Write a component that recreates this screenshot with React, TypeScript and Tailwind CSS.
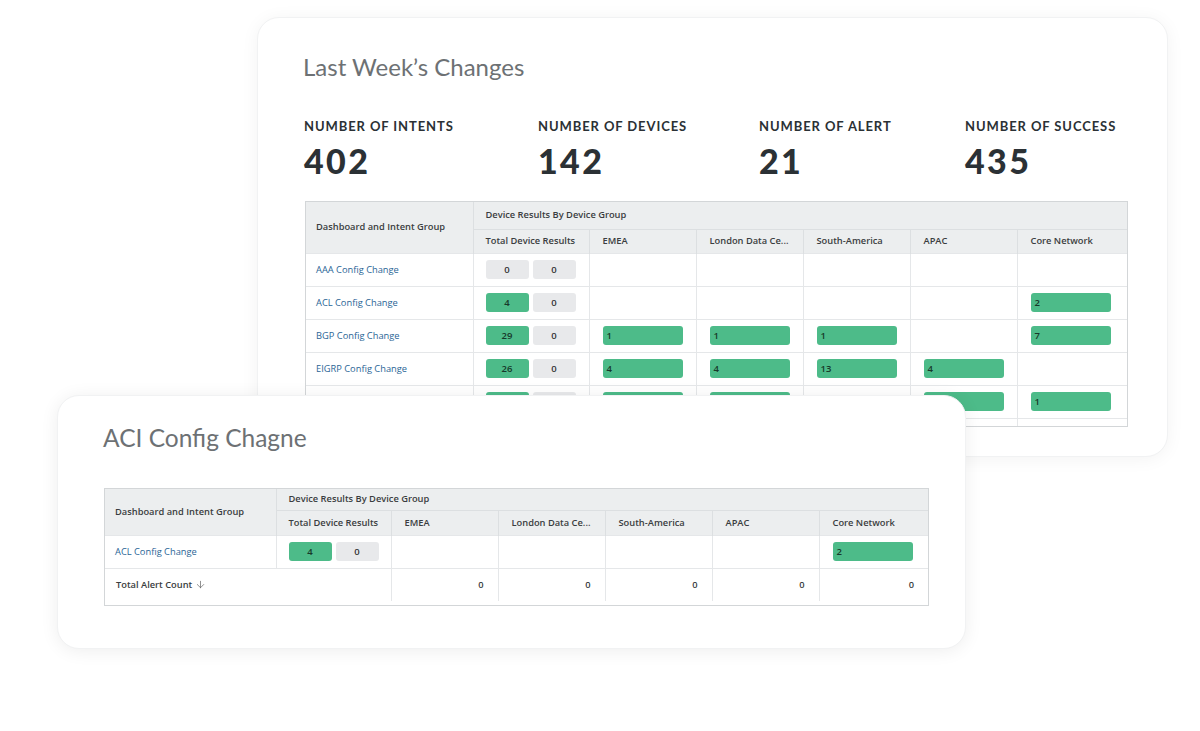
import React from "react";
import { ArrowDown } from "lucide-react";

const GreenWide = ({ v }: { v: string }) => (
  <div className="h-[19px] w-[80px] rounded-[3px] bg-[#4dbb89] pl-[4px] text-left text-[9.5px] font-semibold leading-[19px] text-[#17392a]">
    {v}
  </div>
);

const Pair = ({ a, b }: { a: string; b: string }) => (
  <div className="flex gap-[4px]">
    <div
      className={
        "h-[19px] w-[43px] rounded-[3px] text-center text-[9.5px] font-semibold leading-[19px] " +
        (a === "0" ? "bg-[#e8e9eb] text-[#333]" : "bg-[#4dbb89] text-[#17392a]")
      }
    >
      {a}
    </div>
    <div className="h-[19px] w-[43px] rounded-[3px] bg-[#e8e9eb] text-center text-[9.5px] font-semibold leading-[19px] text-[#333]">
      {b}
    </div>
  </div>
);

const cols = ["EMEA", "London Data Ce...", "South-America", "APAC", "Core Network"];

type Row = { name: string; a: string; b: string; vals: (string | null)[] };

const topRows: Row[] = [
  { name: "AAA Config Change", a: "0", b: "0", vals: [null, null, null, null, null] },
  { name: "ACL Config Change", a: "4", b: "0", vals: [null, null, null, null, "2"] },
  { name: "BGP Config Change", a: "29", b: "0", vals: ["1", "1", "1", null, "7"] },
  { name: "EIGRP Config Change", a: "26", b: "0", vals: ["4", "4", "13", "4", null] },
  { name: "", a: "", b: "", vals: ["", "", null, "", "1"] },
  { name: "", a: "", b: "", vals: [null, null, null, null, null] },
];

function DataTable({
  rows,
  widths,
  height,
  firstHeader,
  secondHeader,
  total,
}: {
  rows: Row[];
  widths: number[];
  height: number;
  firstHeader: number;
  secondHeader: number;
  total?: boolean;
}) {
  return (
    <div className="overflow-hidden border border-[#d3d6d8] bg-white" style={{ height }}>
      <table className="w-full table-fixed border-collapse font-['Open_Sans',sans-serif] text-[9.3px] text-[#3a3d40]">
        <colgroup>
          {widths.map((w, i) => (
            <col key={i} style={{ width: w }} />
          ))}
          <col />
        </colgroup>
        <thead className="bg-[#eceeef]">
          <tr style={{ height: firstHeader }}>
            <th
              rowSpan={2}
              className="border-r border-[#dcdfe1] pl-[10px] text-left align-middle font-semibold"
            >
              Dashboard and Intent Group
            </th>
            <th colSpan={6} className="pl-[12px] text-left align-middle font-semibold">
              Device Results By Device Group
            </th>
          </tr>
          <tr style={{ height: secondHeader }}>
            <th className="border-t border-r border-[#dcdfe1] pl-[12px] text-left font-semibold">
              Total Device Results
            </th>
            {cols.map((c) => (
              <th
                key={c}
                className="border-t border-r border-[#dcdfe1] pl-[13px] text-left font-semibold last:border-r-0"
              >
                {c}
              </th>
            ))}
          </tr>
        </thead>
        <tbody>
          {rows.map((r, idx) => (
            <tr key={idx} className="h-[33px] border-t border-[#e5e7e9]">
              <td className="border-r border-[#e5e7e9] pl-[10px] text-[#2a6596]">{r.name}</td>
              <td className="border-r border-[#e5e7e9] pl-[12px]">
                {r.a !== "" || r.name !== "" || r.vals.some((v) => v !== null) ? (
                  <Pair a={r.a} b={r.b} />
                ) : null}
              </td>
              {r.vals.map((v, i) => (
                <td key={i} className="border-r border-[#e5e7e9] pl-[13px] last:border-r-0">
                  {v !== null && <GreenWide v={v} />}
                </td>
              ))}
            </tr>
          ))}
          {total && (
            <tr className="h-[33px] border-t border-[#e5e7e9]">
              <td colSpan={2} className="border-r border-[#e5e7e9] pl-[11px] font-semibold">
                <span className="inline-flex items-center gap-[3px]">
                  Total Alert Count
                  <ArrowDown size={11} strokeWidth={1.4} className="text-[#555]" />
                </span>
              </td>
              {cols.map((c) => (
                <td
                  key={c}
                  className="border-r border-[#e5e7e9] pr-[14px] text-right font-semibold last:border-r-0"
                >
                  0
                </td>
              ))}
            </tr>
          )}
        </tbody>
      </table>
    </div>
  );
}

const stats = [
  { label: "NUMBER OF INTENTS", v: "402" },
  { label: "NUMBER OF DEVICES", v: "142" },
  { label: "NUMBER OF ALERT", v: "21" },
  { label: "NUMBER OF SUCCESS", v: "435" },
];

export default function App() {
  return (
    <div className="h-[731px] w-[1200px] overflow-hidden bg-white pt-[17px]">
      <div className="relative ml-[257px] h-[440px] w-[911px] rounded-[22px] border border-[#f1f2f3] bg-white pl-[46px] pt-[37px] shadow-[0_2px_18px_rgba(0,0,0,0.05)]">
        <h1 className="-ml-[1px] font-['Lato',sans-serif] text-[24px] font-normal leading-[24px] text-[#6d7174]">
          Last Week’s Changes
        </h1>
        <div className="mt-[40px] grid grid-cols-[234px_221px_206px_auto] font-['Lato',sans-serif] text-[#2b3135]">
          {stats.map((s) => (
            <div key={s.label}>
              <div className="text-[13px] font-bold leading-[14px] tracking-[0.07em]">{s.label}</div>
              <div className="mt-[10px] text-[34px] font-black leading-[36px] tracking-[0.07em]">
                {s.v}
              </div>
            </div>
          ))}
        </div>
        <div className="ml-[1px] mt-[22px] w-[823px]">
          <DataTable
            rows={topRows}
            widths={[167, 116, 107, 107, 107, 107]}
            height={226}
            firstHeader={27}
            secondHeader={24}
          />
        </div>
      </div>
      <div className="relative z-10 -mt-[62px] ml-[57px] h-[254px] w-[909px] rounded-[22px] border border-[#f1f2f3] bg-white pl-[45px] pt-[29px] shadow-[0_2px_18px_rgba(0,0,0,0.07)]">
        <h2 className="font-['Lato',sans-serif] text-[24.5px] font-normal leading-[26px] text-[#6d7174]">
          ACI Config Chagne
        </h2>
        <div className="ml-[1px] mt-[37px] w-[825px]">
          <DataTable
            rows={[topRows[1]]}
            widths={[171, 115, 107, 107, 107, 107]}
            height={118}
            firstHeader={21}
            secondHeader={25}
            total
          />
        </div>
      </div>
    </div>
  );
}
